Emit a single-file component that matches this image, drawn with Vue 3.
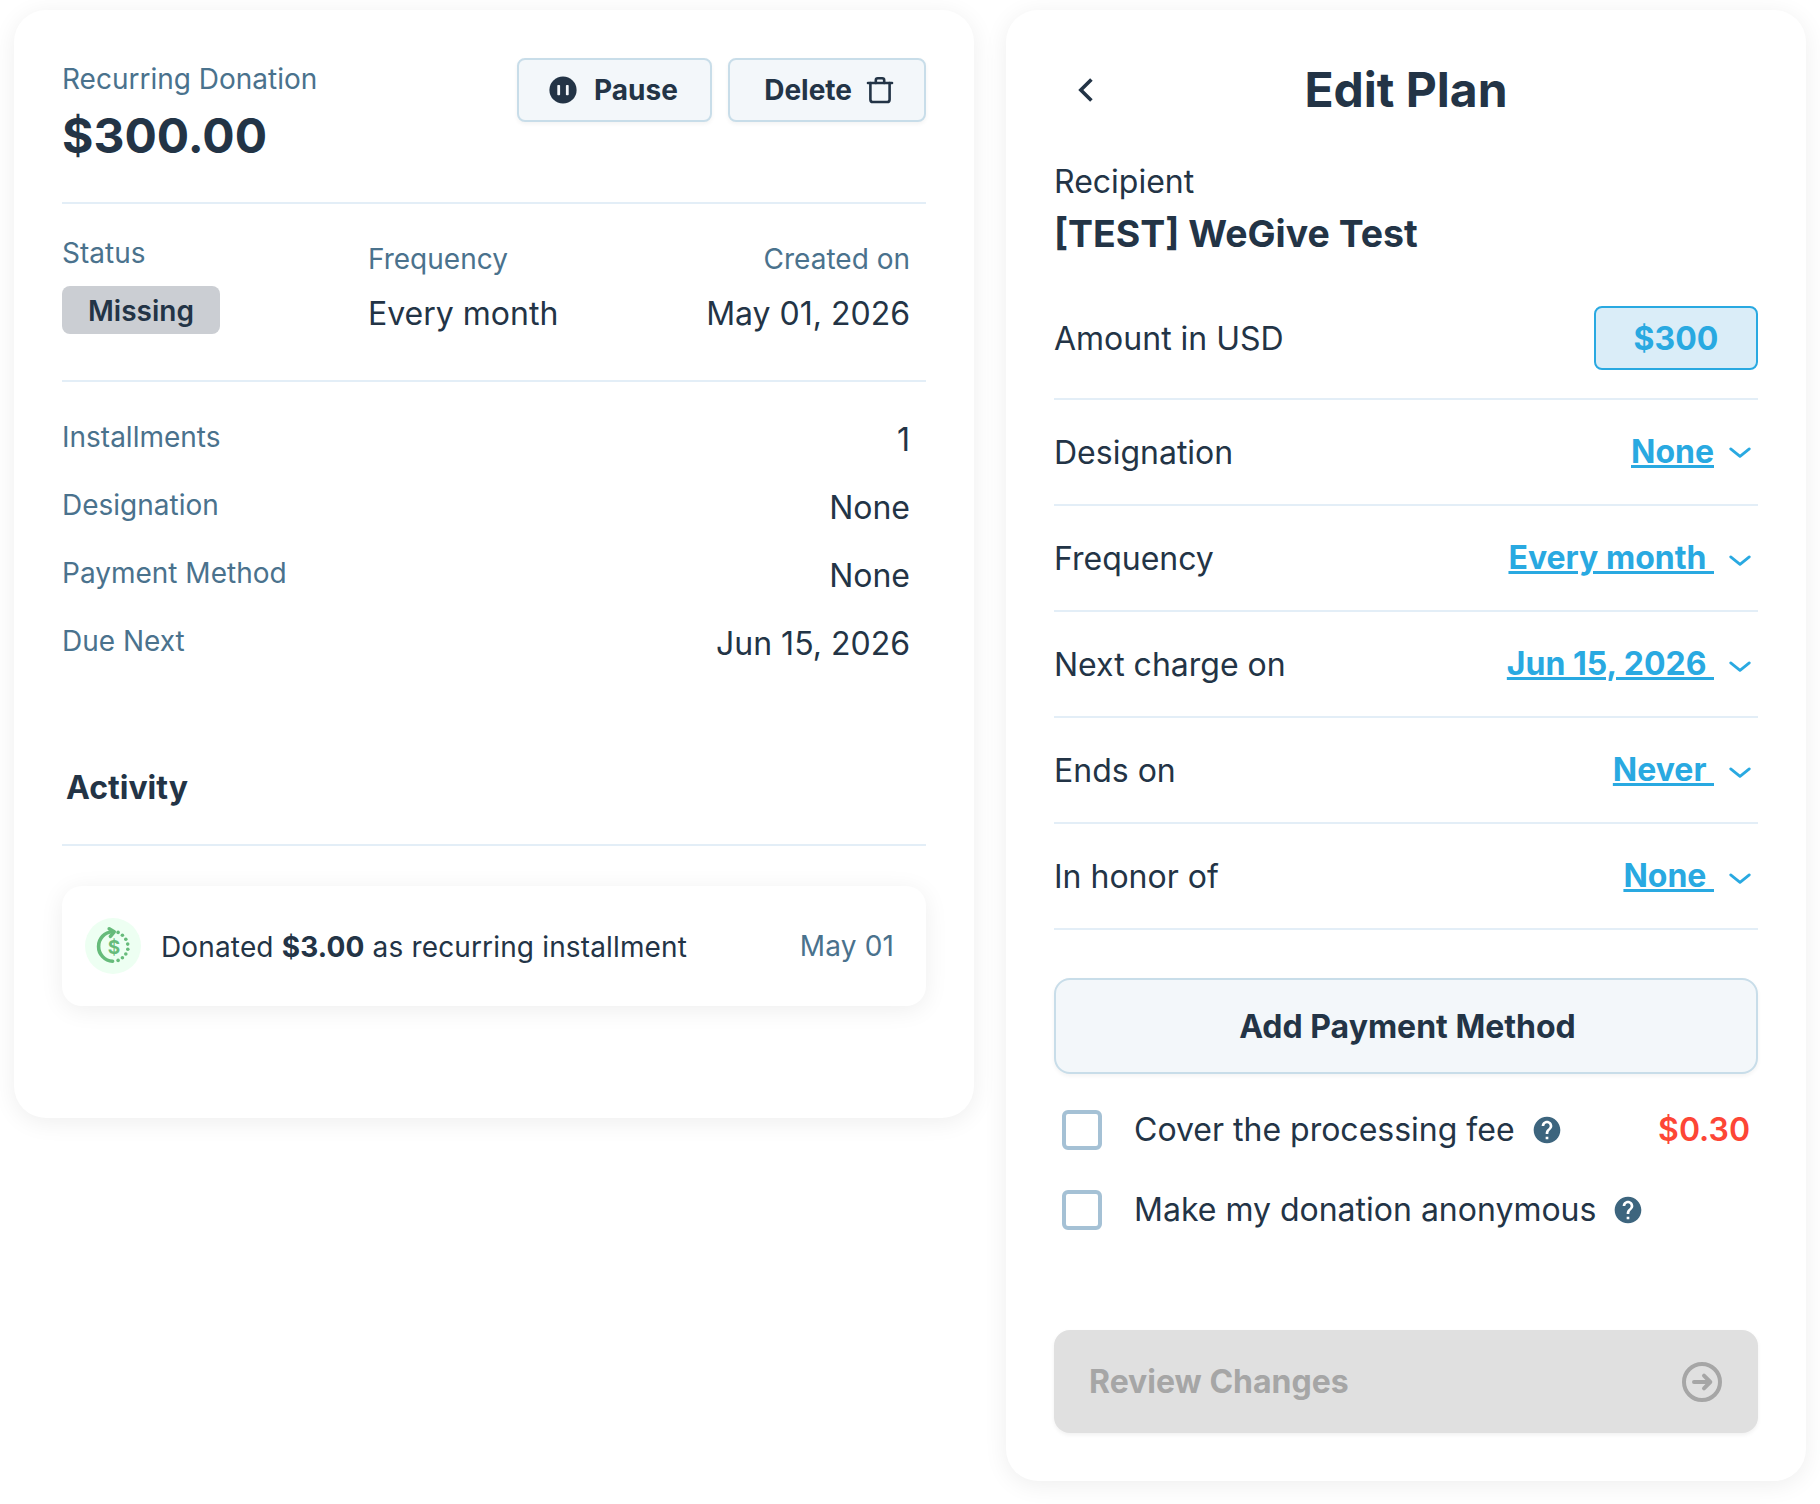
<template>
  <main class="page">
    <section class="card plan-card">
      <header class="plan-header">
        <div>
          <p class="label">Recurring Donation</p>
          <h1 class="plan-amount">$300.00</h1>
        </div>
        <div class="plan-actions">
          <button class="btn btn-small btn-pause" type="button">
            <svg width="28" height="28" viewBox="0 0 28 28">
              <circle cx="14" cy="14" r="13.6" fill="#233446" />
              <rect x="8.3" y="8.9" width="2.8" height="10.4" rx="0.8" fill="#f3f7fa" />
              <rect x="16.9" y="8.9" width="2.8" height="10.4" rx="0.8" fill="#f3f7fa" />
            </svg>
            <span>Pause</span>
          </button>
          <button class="btn btn-small btn-delete" type="button">
            <span>Delete</span>
            <svg
              width="28"
              height="28"
              viewBox="0 0 28 28"
              fill="none"
              stroke="#233446"
              stroke-width="2.6"
              stroke-linecap="round"
              stroke-linejoin="round"
            >
              <path d="M2 7h24" />
              <path d="M9.8 7V4.2a2 2 0 0 1 2-2h4.4a2 2 0 0 1 2 2V7" />
              <path d="M4.4 7v16.4a2.6 2.6 0 0 0 2.6 2.6h14a2.6 2.6 0 0 0 2.6-2.6V7" />
            </svg>
          </button>
        </div>
      </header>

      <div class="plan-summary">
        <div class="summary-status">
          <p class="label">Status</p>
          <span class="chip">Missing</span>
        </div>
        <div class="summary-item">
          <p class="label">Frequency</p>
          <p class="value">Every month</p>
        </div>
        <div class="summary-item right">
          <p class="label">Created on</p>
          <p class="value">May 01, 2026</p>
        </div>
      </div>

      <dl class="plan-details">
        <div v-for="item in details" :key="item.label" class="detail-row">
          <dt class="label">{{ item.label }}</dt>
          <dd class="value">{{ item.value }}</dd>
        </div>
      </dl>

      <h2 class="activity-title">Activity</h2>

      <div class="activity-item">
        <span class="activity-icon">
          <svg width="56" height="56" viewBox="0 0 56 56">
            <path
              d="M27.6 43.2A14.7 14.7 0 0 1 13.6 28.4C13.6 20.6 19.5 14.2 27.6 13.8"
              fill="none"
              stroke="#66bb7a"
              stroke-width="3.6"
              stroke-linecap="round"
            />
            <path
              d="M24.2 10.8l5 3-3.8 4.6"
              fill="none"
              stroke="#66bb7a"
              stroke-width="3.6"
              stroke-linecap="round"
              stroke-linejoin="round"
            />
            <circle
              v-for="(dot, index) in dots"
              :key="index"
              :cx="dot[0]"
              :cy="dot[1]"
              r="1.8"
              fill="#66bb7a"
            />
            <text x="29.1" y="36.4" class="dollar">$</text>
          </svg>
        </span>
        <p class="activity-text">Donated <strong>$3.00</strong> as recurring installment</p>
        <span class="label activity-date">May 01</span>
      </div>
    </section>

    <section class="card edit-card">
      <header class="edit-header">
        <button class="back" type="button" aria-label="Back">
          <svg width="28" height="28" viewBox="0 0 28 28" fill="none" stroke="#233446" stroke-width="3.6">
            <path d="M19.4 3.4L8.8 14l10.6 10.6" />
          </svg>
        </button>
        <h2 class="edit-title">Edit Plan</h2>
      </header>

      <p class="recipient-label">Recipient</p>
      <h3 class="recipient-name">[TEST] WeGive Test</h3>

      <div class="field amount-field">
        <span class="field-label">Amount in USD</span>
        <button class="amount" type="button">$300</button>
      </div>

      <div v-for="field in fields" :key="field.label" class="field">
        <span class="field-label">{{ field.label }}</span>
        <a class="field-link">
          <span class="field-value">{{ field.value }}</span>
          <svg
            class="chevron"
            :class="{ raised: field.label === 'Designation' }"
            width="24"
            height="14"
            viewBox="0 0 24 14"
            fill="none"
            stroke="#29a9e1"
            stroke-width="2.8"
            stroke-linecap="round"
            stroke-linejoin="round"
          >
            <path d="M2.7 2.9L12 10.3l9.3-7.4" />
          </svg>
        </a>
      </div>

      <button class="btn btn-payment" type="button">Add Payment Method</button>

      <label v-for="option in options" :key="option.label" class="option">
        <input v-model="option.checked" type="checkbox" />
        <span>{{ option.label }}</span>
        <svg class="help" width="32" height="32" viewBox="0 0 24 24" fill="#3d657e">
          <path
            d="M12 2C6.48 2 2 6.48 2 12s4.48 10 10 10 10-4.48 10-10S17.52 2 12 2zm1 17h-2v-2h2v2zm2.07-7.75l-.9.92C13.45 12.9 13 13.5 13 15h-2v-.5c0-1.1.45-2.1 1.17-2.83l1.24-1.26c.37-.36.59-.86.59-1.41 0-1.1-.9-2-2-2s-2 .9-2 2H8c0-2.21 1.79-4 4-4s4 1.79 4 4c0 .88-.36 1.68-.93 2.25z"
          />
        </svg>
        <span v-if="option.fee" class="fee">{{ option.fee }}</span>
      </label>

      <button class="btn-review" type="button" disabled>
        <span>Review Changes</span>
        <svg
          width="40"
          height="40"
          viewBox="0 0 40 40"
          fill="none"
          stroke="#a6a6a6"
          stroke-width="4"
          stroke-linecap="round"
          stroke-linejoin="round"
        >
          <circle cx="20" cy="20" r="18" />
          <path d="M12 20h16M22 13.7l6.3 6.3-6.3 6.3" />
        </svg>
      </button>
    </section>
  </main>
</template>

<script setup>
import { reactive } from 'vue';

const details = [
  { label: 'Installments', value: '1' },
  { label: 'Designation', value: 'None' },
  { label: 'Payment Method', value: 'None' },
  { label: 'Due Next', value: 'Jun 15, 2026' },
];

// The trailing space is underlined together with the value
const fields = [
  { label: 'Designation', value: 'None' },
  { label: 'Frequency', value: 'Every month ' },
  { label: 'Next charge on', value: 'Jun 15, 2026 ' },
  { label: 'Ends on', value: 'Never ' },
  { label: 'In honor of', value: 'None ' },
];

const options = reactive([
  { label: 'Cover the processing fee', fee: '$0.30', checked: false },
  { label: 'Make my donation anonymous', fee: '', checked: false },
]);

// Dotted half of the recurring icon
const dots = [
  [33.1, 14.4],
  [37.4, 17.3],
  [40.8, 21.3],
  [42.7, 26.1],
  [42.8, 31.3],
  [40.8, 36],
  [37.4, 39.8],
  [33.1, 42.4],
];
</script>

<style>
body {
  margin: 0;
  background: #fff;
}
</style>

<style scoped>
.page {
  box-sizing: border-box;
  display: flex;
  align-items: flex-start;
  gap: 32px;
  min-height: 1504px;
  padding: 10px 14px;
  font-family: Inter, 'Liberation Sans', sans-serif;
  font-size: 32px;
  line-height: 48px;
  color: #233446;
}

h1,
h2,
h3,
p,
dl,
dd {
  margin: 0;
}

button {
  font-family: inherit;
  color: inherit;
  padding: 0;
  cursor: pointer;
}

svg {
  display: block;
  flex-shrink: 0;
}

.card {
  box-sizing: border-box;
  padding: 48px;
  background: #fff;
  border-radius: 32px;
  box-shadow: 0 4px 24px rgba(0, 0, 0, 0.07);
}

.plan-card {
  width: 960px;
  height: 1108px;
}

.edit-card {
  width: 800px;
  height: 1471px;
}

.label {
  font-size: 28px;
  line-height: 42px;
  color: #4a728d;
}

/* Plan card */
.plan-header {
  display: flex;
  justify-content: space-between;
  align-items: flex-start;
  height: 144px;
  border-bottom: 2px solid #e3eef7;
}

.plan-amount {
  font-size: 48px;
  line-height: 72px;
  font-weight: 700;
}

.plan-actions {
  display: flex;
  gap: 16px;
}

.btn {
  box-sizing: border-box;
  display: flex;
  align-items: center;
  background: #f3f7fa;
  border: 2px solid #c8dde9;
  font-weight: 700;
  box-shadow: 0 2px 4px rgba(0, 0, 0, 0.05);
}

.btn-small {
  height: 64px;
  border-radius: 8px;
  font-size: 28px;
}

.btn-pause {
  width: 195px;
  padding-left: 30px;
  gap: 17px;
}

.btn-delete {
  width: 198px;
  justify-content: flex-end;
  padding-right: 30px;
  gap: 14px;
}

.plan-summary {
  display: grid;
  grid-template-columns: 306px 1fr auto;
  box-sizing: border-box;
  height: 178px;
  padding: 28px 16px 0 0;
  border-bottom: 2px solid #e3eef7;
}

.summary-item {
  padding-top: 6px;
}

.summary-item .value {
  margin-top: 10px;
}

.right {
  text-align: right;
}

.chip {
  display: block;
  box-sizing: border-box;
  width: 158px;
  height: 48px;
  margin-top: 12px;
  padding-top: 1px;
  border-radius: 8px;
  background: #cbced3;
  font-size: 28px;
  line-height: 48px;
  font-weight: 600;
  text-align: center;
}

.plan-details {
  display: flex;
  flex-direction: column;
  gap: 20px;
  padding: 34px 16px 0 0;
}

.detail-row {
  display: flex;
  justify-content: space-between;
  height: 48px;
}

.activity-title {
  margin-top: 96px;
  padding: 0 4px 32px;
  border-bottom: 2px solid #e3eef7;
  font-size: 32px;
  font-weight: 700;
}

.activity-item {
  display: flex;
  align-items: center;
  box-sizing: border-box;
  height: 120px;
  margin-top: 40px;
  padding: 0 32px 0 23px;
  border-radius: 20px;
  box-shadow: 0 4px 24px rgba(0, 0, 0, 0.07);
}

.activity-icon {
  width: 56px;
  height: 56px;
  border-radius: 50%;
  background: #edfff2;
}

.dollar {
  fill: #66bb7a;
  font-size: 19px;
  font-weight: 700;
  text-anchor: middle;
}

.activity-text {
  flex: 1;
  padding: 2px 0 0 20px;
  font-size: 28px;
  line-height: 42px;
  letter-spacing: 0.15px;
}

.activity-date {
  letter-spacing: 0.15px;
}

/* Edit card */
.edit-header {
  display: grid;
  grid-template-columns: 64px 1fr 64px;
  align-items: center;
  height: 64px;
}

.back {
  display: flex;
  align-items: center;
  justify-content: center;
  height: 64px;
  background: none;
  border: none;
}

.edit-title {
  font-size: 48px;
  line-height: 64px;
  font-weight: 700;
  text-align: center;
}

.recipient-label {
  margin-top: 36px;
}

.recipient-name {
  margin-top: 1px;
  font-size: 37.44px;
  line-height: 54px;
  font-weight: 700;
}

.field {
  display: flex;
  align-items: center;
  justify-content: space-between;
  height: 104px;
  border-bottom: 2px solid #e3eef7;
}

.field-label {
  padding-top: 2px;
}

.amount-field {
  align-items: flex-start;
  height: 92px;
  margin-top: 45px;
  line-height: 64px;
}

.amount-field .field-label {
  padding-top: 1px;
}

.amount {
  box-sizing: border-box;
  width: 164px;
  height: 64px;
  border: 2px solid #29a9e1;
  border-radius: 8px;
  background: #daedf8;
  color: #29a9e1;
  font-size: 32px;
  font-weight: 700;
}

.field-link {
  display: flex;
  align-items: center;
  gap: 14px;
  padding-right: 6px;
  color: #29a9e1;
  font-weight: 700;
}

.field-value {
  white-space: pre;
  text-decoration: underline;
  text-decoration-thickness: 3px;
  text-underline-offset: 2px;
}

.chevron {
  margin-top: 6px;
}

.chevron.raised {
  margin-top: 2px;
}

.btn-payment {
  justify-content: center;
  width: 704px;
  height: 96px;
  margin: 48px 0 16px;
  border-radius: 16px;
  font-size: 32px;
  padding-left: 3px;
}

.option {
  display: flex;
  align-items: center;
  height: 80px;
  padding: 0 8px;
}

.option input {
  appearance: none;
  box-sizing: border-box;
  width: 40px;
  height: 40px;
  margin: 0 32px 0 0;
  border: 4px solid #a5c1d5;
  border-radius: 6px;
}

.help {
  margin-left: 16px;
}

.fee {
  margin-left: auto;
  color: #fd4636;
  font-weight: 600;
}

.btn-review {
  box-sizing: border-box;
  display: flex;
  align-items: center;
  justify-content: space-between;
  width: 704px;
  height: 103px;
  margin-top: 80px;
  padding: 0 36px 0 35px;
  border: none;
  border-radius: 16px;
  background: #e0e0e0;
  box-shadow: 0 2px 4px rgba(0, 0, 0, 0.06);
  color: #a6a6a6;
  font-size: 32px;
  font-weight: 700;
}
</style>
